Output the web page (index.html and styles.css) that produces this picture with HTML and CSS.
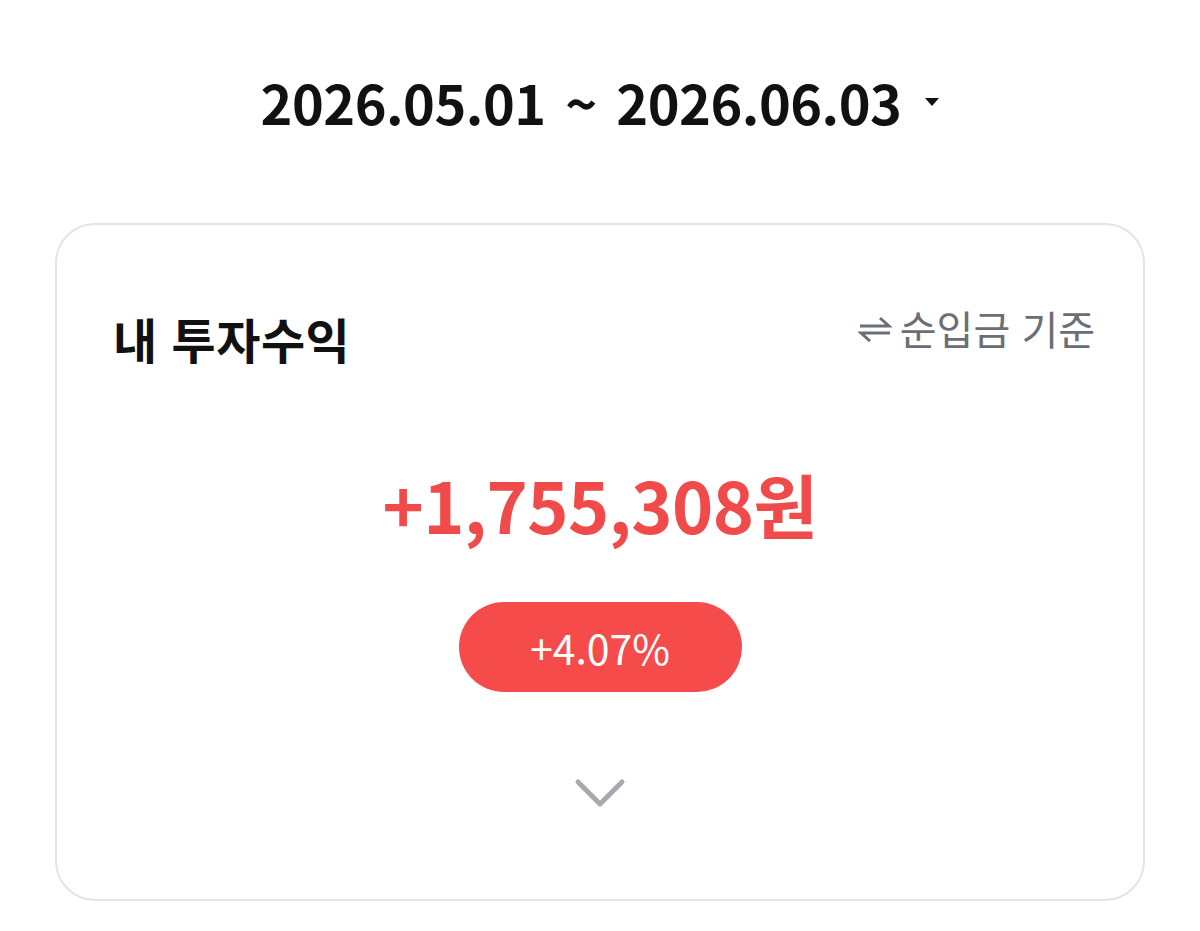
FILE: index.html
```html
<!DOCTYPE html>
<html lang="ko">
<head>
    <meta charset="UTF-8">
    <meta name="viewport" content="width=device-width, initial-scale=1.0">
    <title>내 투자수익</title>
    <link rel="stylesheet" href="styles.css">
</head>
<body>

    <header class="period">
        <span class="period-text">2026.05.01 ~ 2026.06.03</span>
        <span class="period-caret"></span>
    </header>

    <section class="card">
        <div class="card-head">
            <h2>내 투자수익</h2>
            <span class="basis">
                <!-- swap icon -->
                <svg class="swap" width="34" height="26" viewBox="0 0 34 26">
                    <path d="M2 10 H31 L22 2" fill="none" stroke="#6c6e75" stroke-width="3" stroke-linejoin="miter"/>
                    <path d="M32 17 H3 L12 25" fill="none" stroke="#6c6e75" stroke-width="3" stroke-linejoin="miter"/>
                </svg>
                순입금 기준
            </span>
        </div>

        <p class="amount">+1,755,308원</p>
        <span class="rate">+4.07%</span>

        <!-- expand toggle -->
        <svg class="more" width="52" height="32" viewBox="0 0 52 32">
            <path d="M4 4 L26 26 L48 4" fill="none" stroke="#a9aab0" stroke-width="5" stroke-linecap="round" stroke-linejoin="round"/>
        </svg>
    </section>

</body>
</html>
```

FILE: styles.css
```css
body {
    font-family: "Noto Sans CJK KR", "Noto Sans", sans-serif;
    margin: 0;
    padding: 0;
    background-color: #fff;
    color: #111;
}

.period {
    display: flex;
    justify-content: center;
    align-items: center;
    gap: 24px;
    padding-top: 62px;
    height: 80px;
}

.period-text {
    font-size: 54px;
    font-weight: 700;
    letter-spacing: -0.5px;
    word-spacing: 5px;
    line-height: 80px;
}

.period-caret {
    width: 0;
    height: 0;
    border-left: 7px solid transparent;
    border-right: 7px solid transparent;
    border-top: 8px solid #111;
}

.card {
    margin: 81px 55px 0;
    height: 674px;
    border: 2px solid #e4e4e8;
    border-radius: 40px;
    display: flex;
    flex-direction: column;
    align-items: center;
}

.card-head {
    align-self: stretch;
    display: flex;
    justify-content: space-between;
    align-items: center;
    padding: 83px 48px 0 56px;
}

.card-head h2 {
    margin: 0;
    font-size: 48px;
    font-weight: 700;
    line-height: 60px;
    letter-spacing: 0.5px;
}

.basis {
    display: flex;
    align-items: center;
    gap: 8px;
    font-size: 40px;
    color: #6c6e75;
    margin-top: -20px;
}

.swap {
    margin-top: 2px;
}

.amount {
    margin: 96px 0 0;
    font-size: 70px;
    font-weight: 700;
    color: #f04a4a;
    line-height: 80px;
    letter-spacing: -0.5px;
}

.rate {
    margin-top: 58px;
    width: 283px;
    height: 90px;
    border-radius: 45px;
    background-color: #f54b4b;
    color: #fff;
    font-size: 41px;
    line-height: 90px;
    text-align: center;
}

.more {
    margin-top: 86px;
}
```
